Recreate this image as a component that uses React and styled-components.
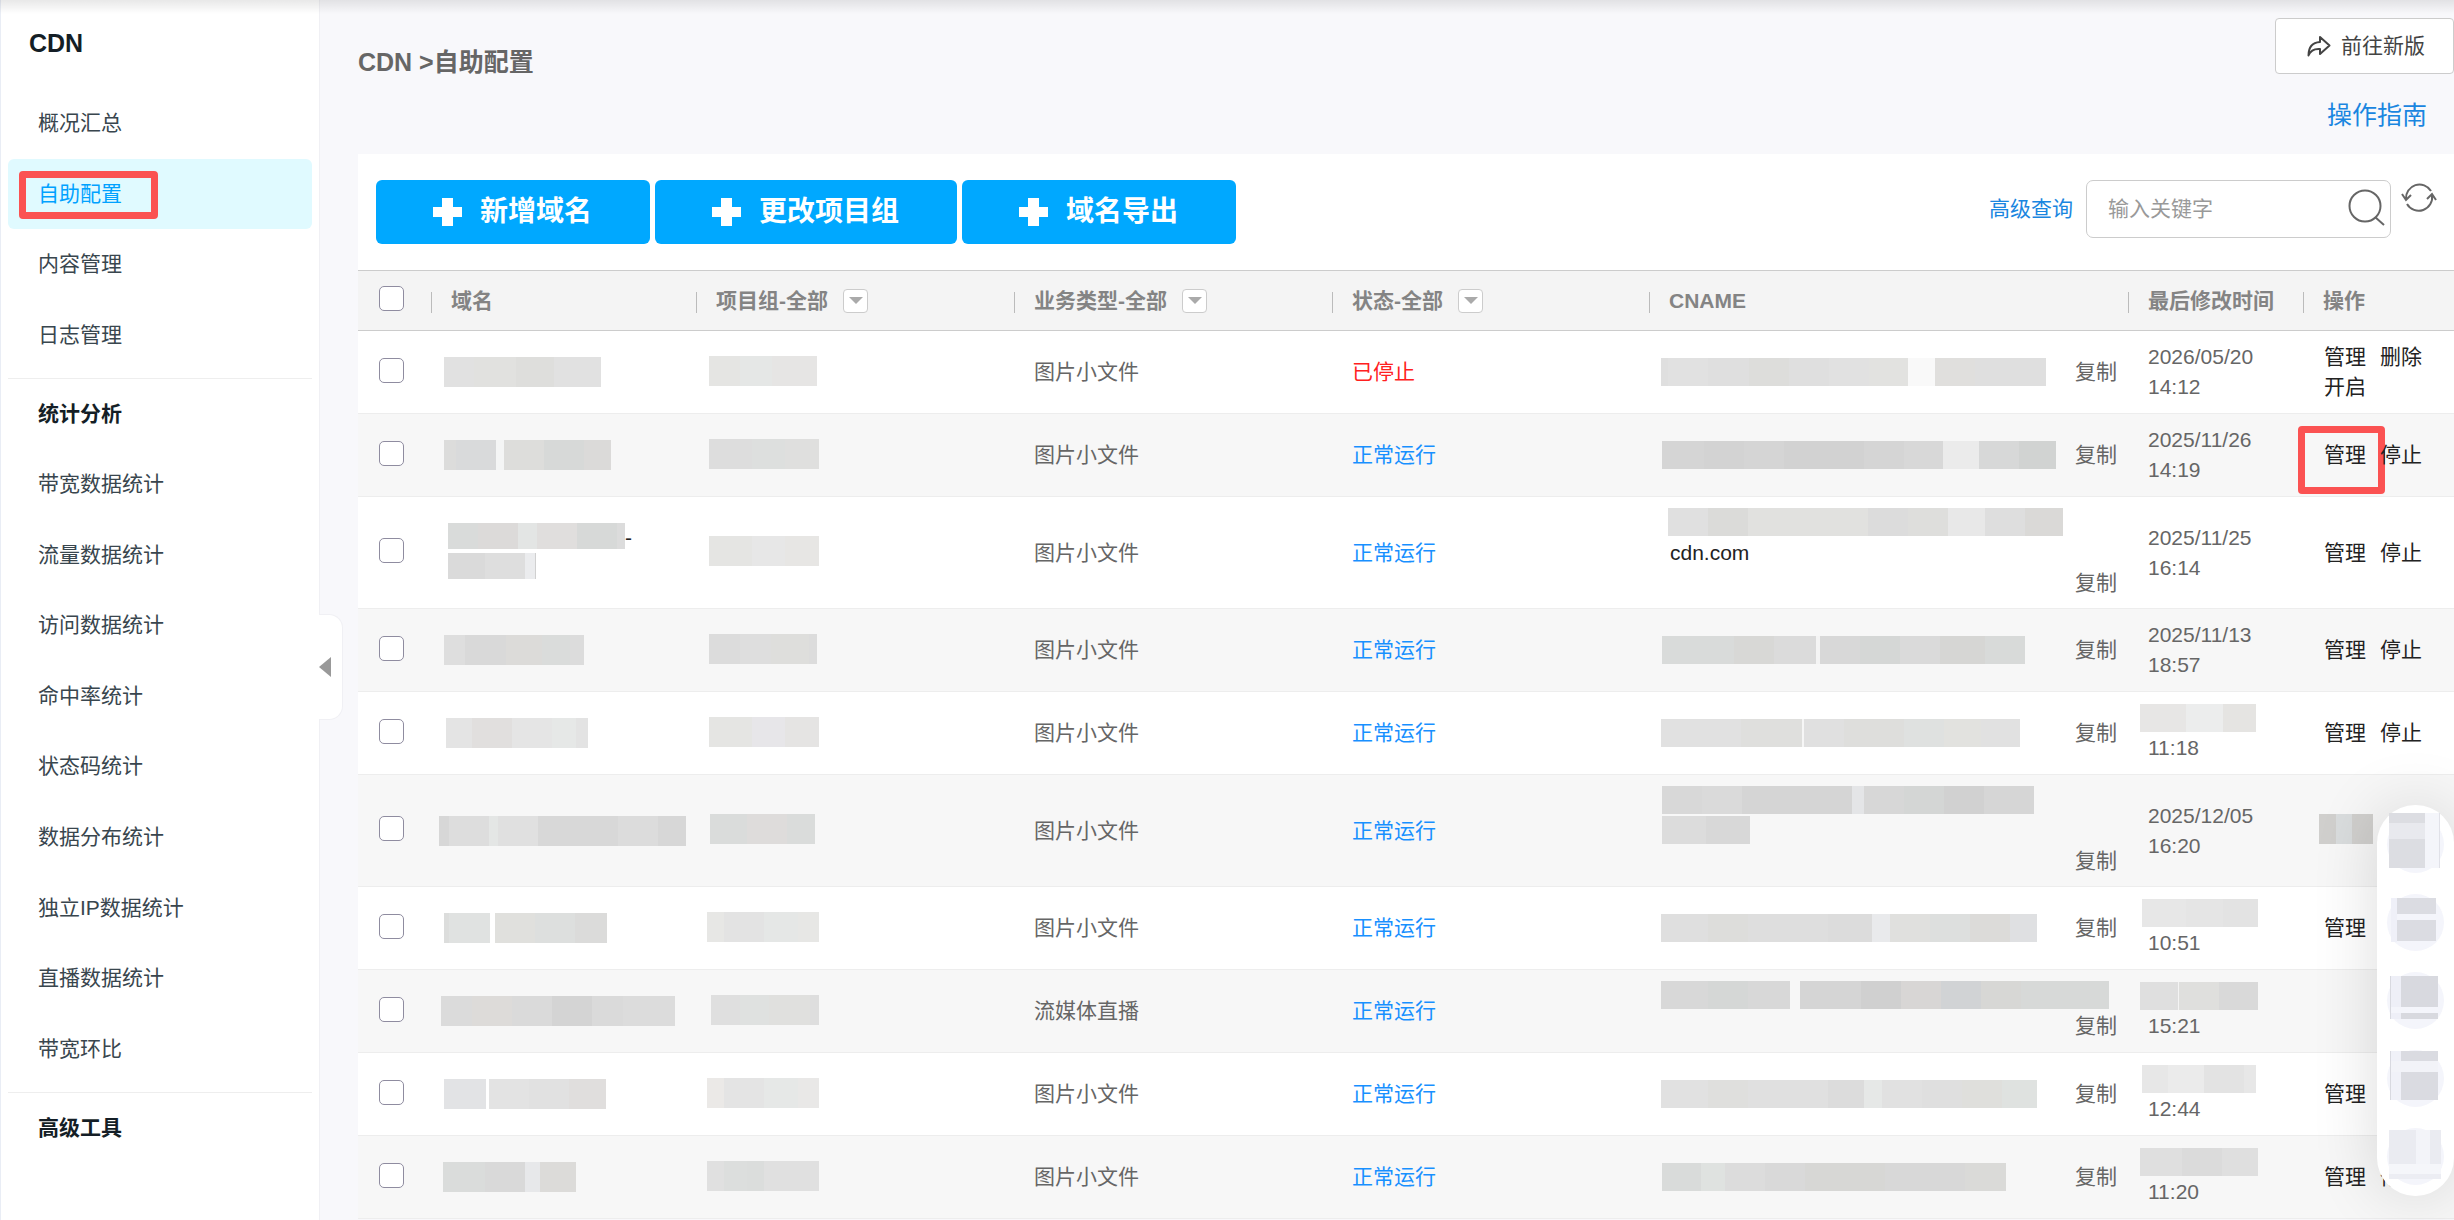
import React from "react";
import styled, { createGlobalStyle } from "styled-components";

const GlobalStyle = createGlobalStyle`
  * {
    box-sizing: border-box;
  }
  body {
    margin: 0;
    background: #f8f8fb;
    color: #666;
    font-family: "Liberation Sans", "Noto Sans CJK SC", sans-serif;
    font-size: 21px;
    line-height: 30px;
  }
  a {
    color: inherit;
    text-decoration: none;
  }
  button, input {
    font: inherit;
  }
`;

const Page = styled.div`
  display: flex;
  min-height: 100vh;
  position: relative;
  overflow: hidden;
`;

const TopShadow = styled.div`
  position: absolute;
  top: 0;
  left: 0;
  right: 0;
  height: 14px;
  pointer-events: none;
  background: linear-gradient(rgba(0, 0, 0, 0.09), rgba(0, 0, 0, 0));
`;

/* ---------- sidebar ---------- */

const Sidebar = styled.aside`
  position: relative;
  flex: none;
  width: 320px;
  padding: 28px 7px 0;
  background: #fff;
  border-left: 1px solid #e9edf5;
  border-right: 1px solid #f0f0f4;
`;

const SideTitle = styled.h1`
  margin: 0 0 30px;
  padding-left: 21px;
  font-size: 25px;
  line-height: 30px;
  color: #141e26;
`;

const Menu = styled.ul`
  display: grid;
  grid-auto-rows: 1fr;
  height: ${(p) => p.$height}px;
  margin: 0 0 8px;
  padding: 0;
  list-style: none;
`;

const MenuLink = styled.a`
  display: flex;
  align-items: center;
  height: 100%;
  padding-left: 30px;
  border-radius: 6px;
  color: ${(p) => (p.$active ? "#00a2ff" : "#39464e")};
  background: ${(p) => (p.$active ? "#e0faff" : "transparent")};
`;

const GroupTitle = styled.h2`
  margin: 0;
  padding-left: 30px;
  border-top: 1px solid #eee;
  font-size: 21px;
  line-height: 70px;
  color: #141e26;
`;

const Collapse = styled.button`
  position: absolute;
  left: 100%;
  top: calc(50% + 4px);
  width: 24px;
  height: 106px;
  padding: 0;
  border: 1px solid #f0f0f4;
  border-left: 0;
  border-radius: 0 14px 14px 0;
  background: #fff;
  svg {
    display: block;
  }
`;

const Marked = styled.span`
  position: relative;
`;

const RedMark = styled.i`
  position: absolute;
  inset: ${(p) => p.$inset};
  border: 7px solid #fb5252;
  border-radius: 4px;
  pointer-events: none;
`;

/* ---------- main ---------- */

const Main = styled.main`
  flex: 1;
  min-width: 0;
  padding-left: 38px;
`;

const Header = styled.header`
  display: flex;
  justify-content: space-between;
  align-items: flex-start;
  padding: 18px 0 24px;
`;

const Breadcrumb = styled.div`
  padding-top: 29px;
  font-size: 25px;
  font-weight: bold;
`;

const HeaderLinks = styled.div`
  display: flex;
  flex-direction: column;
  align-items: flex-end;
  gap: 26px;
`;

const NewVersion = styled.button`
  display: flex;
  align-items: center;
  gap: 10px;
  height: 56px;
  padding: 0 28px 0 31px;
  border: 1px solid #ccc;
  border-radius: 4px;
  background: #fff;
  color: #444;
`;

const GuideLink = styled.a`
  margin-right: 27px;
  font-size: 25px;
  color: #1a86e0;
`;

const Panel = styled.section`
  background: #fff;
`;

const Toolbar = styled.div`
  display: flex;
  justify-content: space-between;
  padding: 26px 17px 26px 18px;
`;

const ButtonGroup = styled.div`
  display: flex;
  gap: 5px;
`;

const AddButton = styled.button`
  display: flex;
  align-items: center;
  gap: 18px;
  height: 64px;
  padding: 0 58px 0 57px;
  border: 0;
  border-radius: 6px;
  background: #00a8ff;
  color: #fff;
  font-size: 28px;
  font-weight: bold;
`;

const SearchGroup = styled.div`
  display: flex;
  align-items: center;
  height: 58px;
`;

const AdvancedLink = styled.a`
  margin-right: 13px;
  color: #1a86e0;
`;

const SearchBox = styled.label`
  display: flex;
  align-items: center;
  width: 305px;
  height: 58px;
  padding: 0 4px 0 21px;
  border: 1px solid #ccc;
  border-radius: 7px;
  input {
    flex: 1;
    min-width: 0;
    padding: 0;
    border: 0;
    outline: 0;
    background: none;
  }
  input::placeholder {
    color: #999;
  }
`;

const IconButton = styled.button`
  display: flex;
  padding: 0;
  border: 0;
  background: none;
`;

const Refresh = styled(IconButton)`
  align-self: flex-start;
  margin-left: 10px;
`;

/* ---------- table ---------- */

const Table = styled.table`
  width: 100%;
  table-layout: fixed;
  border-collapse: separate;
  border-spacing: 0;
`;

const Col = styled.col`
  width: ${(p) => (p.$w ? p.$w + "px" : "auto")};
`;

const Th = styled.th`
  height: 61px;
  padding: 0;
  border-top: 1px solid #ccc;
  border-bottom: 1px solid #ccc;
  background: #f4f4f4;
  color: #848484;
  text-align: left;
`;

const ThInner = styled.div`
  display: flex;
  align-items: center;
  gap: 15px;
  &::before {
    content: "";
    width: 1px;
    height: 21px;
    margin: 3px 4px 0 0;
    background: #bbb;
  }
`;

const FilterButton = styled.button`
  display: flex;
  align-items: center;
  justify-content: center;
  width: 25px;
  height: 24px;
  padding: 0;
  border: 1px solid #ccc;
  border-radius: 4px;
  background: #fff;
`;

const Tr = styled.tr`
  height: ${(p) => (p.$tall ? 112 : 83)}px;
  background: ${(p) => (p.$grey ? "#f7f7f7" : "#fff")};
`;

const Td = styled.td`
  padding: 0 0 0 ${(p) => p.$pad}px;
  border-bottom: 1px solid #ededed;
  color: ${(p) => p.$color || "#666"};
`;

const Check = styled.input`
  appearance: none;
  display: block;
  width: 25px;
  height: 25px;
  margin: 0 0 4px 21px;
  border: 1px solid #8f8ca0;
  border-radius: 5px;
  background: #fff;
`;

const Line = styled.div`
  display: flex;
  align-items: ${(p) => (p.$top ? "flex-start" : "center")};
  height: 30px;
  color: #222;
`;

const MaskCell = styled.div`
  display: flex;
  padding-bottom: 3px;
`;

const Strip = styled.span`
  display: flex;
  flex: none;
  height: ${(p) => p.$h}px;
`;

const Block = styled.i`
  width: ${(p) => p.$w}px;
  background: ${(p) => p.$c};
`;

const Cname = styled.div`
  display: flex;
  flex-direction: ${(p) => (p.$stacked ? "column" : "row")};
  justify-content: space-between;
  padding-right: 11px;
`;

const CnameText = styled.span`
  padding-left: 9px;
`;

const Copy = styled.a`
  flex: none;
  align-self: flex-end;
  color: #666;
`;

const TimeLine = styled.div`
  padding-left: ${(p) => (p.$masked ? 0 : 8)}px;
  display: flex;
  align-items: center;
  height: 30px;
`;

const Actions = styled.div`
  display: flex;
  flex-wrap: wrap;
  column-gap: 14px;
  color: #222;
`;

/* ---------- floating bar ---------- */

const FloatBar = styled.div`
  position: absolute;
  right: 0;
  top: 805px;
  display: flex;
  flex-direction: column;
  align-items: center;
  gap: 21px;
  width: 77px;
  padding: 11px 0;
  border-radius: 38px;
  background: #fff;
  box-shadow: 0 0 66px rgba(0, 0, 0, 0.14);
`;

const FloatItem = styled.button`
  width: 57px;
  height: 57px;
  padding: 0;
  border: 0;
  border-radius: 50%;
  background: #f4f5fb;
  svg {
    display: block;
    overflow: visible;
  }
`;

const menuTop = ["概况汇总", "自助配置", "内容管理", "日志管理"];
const menuStats = [
  "带宽数据统计",
  "流量数据统计",
  "访问数据统计",
  "命中率统计",
  "状态码统计",
  "数据分布统计",
  "独立IP数据统计",
  "直播数据统计",
  "带宽环比",
];

const columns = [
  { w: 265, title: "域名" },
  { w: 318, title: "项目组-全部", filter: true },
  { w: 318, title: "业务类型-全部", filter: true },
  { w: 317, title: "状态-全部", filter: true },
  { title: "CNAME" },
  { w: 175, title: "最后修改时间" },
  { w: 151, title: "操作" },
];

const NONE = "transparent";

// every masked value is a list of [width, color]
const rows = [
  {
    domain: [[[5, NONE], [30, "#e1e1e1"], [42, "#e1e1df"], [38, "#dededc"], [47, "#e1e1e1"]]],
    project: [[2, NONE], [31, "#e5e5e3"], [32, "#e5e7e6"], [45, "#e6e5e4"]],
    status: "已停止",
    cname: [[[7, "#dfdfdf"], [40, "#e1e1e1"], [41, "#dfdfdf"], [40, "#dddddb"], [40, "#dfdfdf"], [40, "#e1e1e1"], [39, "#e2e2e0"], [27, "#f9f9f9"], [40, "#e0dfdd"], [71, "#dfdfdf"]]],
    time: ["2026/05/20", "14:12"],
    actions: ["管理", "删除", "开启"],
  },
  {
    domain: [[[5, NONE], [12, "#dcdcdb"], [40, "#d9dadb"], [8, "#f4f5f5"], [40, "#dddddb"], [40, "#d7d9d8"], [27, "#dbdad9"]]],
    project: [[2, NONE], [43, "#dddddd"], [33, "#dddfde"], [34, "#dfdfde"]],
    cname: [[[1, NONE], [42, "#d5d5d5"], [40, "#d3d3d3"], [40, "#d5d5d5"], [80, "#d2d2d2"], [40, "#d5d5d5"], [39, "#d8d8d8"], [36, "#ebebeb"], [40, "#d7d8d8"], [37, "#d1d3d2"]]],
    time: ["2025/11/26", "14:19"],
    actions: ["管理", "停止"],
    marked: true,
  },
  {
    tall: true,
    domain: [
      [[9, NONE], [30, "#d9dbda"], [40, "#dcdad9"], [19, "#e3e5e4"], [40, "#e0dedd"], [40, "#d7d9d8"], [8, "#dcdcdc"]],
      [[9, NONE], [37, "#dadada"], [40, "#dedede"], [10, "#ebecee"], [1, "#d0d0d0"]],
    ],
    domainTail: "-",
    project: [[2, NONE], [43, "#e5e5e3"], [33, "#e7e7e7"], [34, "#e7e6e4"]],
    cname: [[[7, NONE], [40, "#e0e0e0"], [40, "#dbdbd9"], [120, "#e1e1df"], [40, "#dcdcdc"], [40, "#dededc"], [37, "#e8e8e8"], [40, "#dedede"], [38, "#dad9d7"]]],
    cnameText: "cdn.com",
    stacked: true,
    time: ["2025/11/25", "16:14"],
    actions: ["管理", "停止"],
  },
  {
    domain: [[[5, NONE], [21, "#dedede"], [41, "#d9d9d9"], [36, "#dcdbd9"], [28, "#dadcdb"], [14, "#dcdcdc"]]],
    project: [[2, NONE], [31, "#dcdcdc"], [31, "#dedede"], [38, "#dededc"], [8, "#dcdcdc"]],
    cname: [[[1, NONE], [72, "#d9dbda"], [40, "#d8d8d6"], [42, "#dbdbdb"], [4, "#f4f4f4"], [40, "#d8d8d8"], [40, "#d5d7d6"], [40, "#dadada"], [45, "#d6d6d4"], [40, "#d8dad9"]]],
    time: ["2025/11/13", "18:57"],
    actions: ["管理", "停止"],
  },
  {
    domain: [[[7, NONE], [26, "#e4e4e4"], [40, "#e1dfde"], [40, "#e5e5e5"], [24, "#e6e8e7"], [12, "#e3e3e3"]]],
    project: [[2, NONE], [43, "#e5e5e3"], [33, "#e7e6e9"], [34, "#e5e4e3"]],
    cname: [[[80, "#e1e1e1"], [61, "#dfdfdd"], [2, "#f6f6f6"], [40, "#e0e0e0"], [60, "#dededc"], [40, "#dfe1e0"], [37, "#e2e2df"], [39, "#e1e1e1"]]],
    timeMask: [[46, "#e7e6e5"], [37, "#eceded"], [33, "#e5e4e2"]],
    time: [null, "11:18"],
    actions: ["管理", "停止"],
  },
  {
    tall: true,
    domain: [[[10, "#d7d7d7"], [40, "#dddddd"], [9, "#e4e6e5"], [40, "#e0e0e0"], [80, "#d8d8d8"], [40, "#dcdcdc"], [28, "#d7d7d7"]]],
    project: [[3, NONE], [37, "#dadcdb"], [40, "#dedcdb"], [28, "#dadcdb"]],
    cname: [
      [[1, NONE], [40, "#d8d8d8"], [40, "#dadada"], [110, "#d5d5d5"], [12, "#e4e5e7"], [40, "#d7d7d7"], [40, "#d4d6d5"], [40, "#d1d1d1"], [50, "#d6d6d6"]],
      [[1, NONE], [44, "#dcdcdc"], [44, "#d8d8d8"]],
    ],
    stacked: true,
    time: ["2025/12/05", "16:20"],
    actionMask: [[17, "#d0cfcd"], [16, "#d9dcdd"], [21, "#d0cfcd"]],
  },
  {
    domain: [[[5, NONE], [5, "#dcdddc"], [41, "#e0e2e1"], [5, NONE], [40, "#e0e0dd"], [40, "#dddfde"], [32, "#dbdbda"]]],
    project: [[17, "#e7e7e5"], [40, "#e3e3e3"], [34, "#e5e7e6"], [21, "#e7e7e5"]],
    cname: [[[47, "#dfdfdf"], [40, "#dddddb"], [80, "#dedede"], [44, "#dcdcdc"], [18, "#e9eaec"], [40, "#e0e0de"], [40, "#dddfde"], [40, "#dcdbd9"], [27, "#dfe0e2"]]],
    timeMask: [[2, NONE], [44, "#e7e7e7"], [37, "#e5e5e5"], [35, "#e3e3e3"]],
    time: [null, "10:51"],
    actions: ["管理"],
  },
  {
    domain: [[[2, NONE], [31, "#dbdbdb"], [40, "#dddbd9"], [40, "#dadada"], [40, "#d4d4d4"], [31, "#dadada"], [52, "#dcdcdc"]]],
    type: "流媒体直播",
    project: [[4, NONE], [29, "#dfdfdf"], [29, "#dfe1e0"], [41, "#e0e0de"], [9, "#dedede"]],
    cname: [[[47, "#d8d8d8"], [40, "#d5d7d6"], [42, "#d8d8d8"], [10, NONE], [61, "#d5d5d5"], [40, "#d0d0d0"], [40, "#d8d6d5"], [40, "#d1d3d5"], [40, "#d7d7d5"], [88, "#d7d9d8"]]],
    stacked: true,
    timeMask: [[38, "#dfdfdf"], [1, "#f4f4f4"], [40, "#dfdfdd"], [39, "#d9d9d9"]],
    time: [null, "15:21"],
  },
  {
    domain: [[[5, NONE], [42, "#e2e3e5"], [3, NONE], [40, "#e3e3e3"], [40, "#e1e1e1"], [37, "#e0dedd"]]],
    project: [[17, "#ebe9e7"], [40, "#e4e4e4"], [34, "#e6e8e7"], [21, "#e9e8e7"]],
    cname: [[[47, "#e1e1e1"], [40, "#dfdfdd"], [80, "#e0e0e0"], [36, "#dcdcdc"], [18, "#e6e8e7"], [40, "#e1e1e1"], [40, "#dfdfdf"], [40, "#dfdfdc"], [35, "#dfe2e0"]]],
    timeMask: [[2, NONE], [26, "#e7e7e7"], [36, "#ebebeb"], [40, "#e3e3e3"], [12, "#e7e7e7"]],
    time: [null, "12:44"],
    actions: ["管理"],
  },
  {
    domain: [[[4, NONE], [42, "#dadcdb"], [40, "#d9d9d9"], [15, "#e7e8ea"], [36, "#dcdbd9"]]],
    project: [[17, "#e0e0e0"], [23, "#dcdedd"], [17, "#dbdddc"], [55, "#e0e0e0"]],
    cname: [[[1, NONE], [39, "#d9dbda"], [24, "#dfe2e0"], [40, "#dcdcdc"], [40, "#d9d9d9"], [80, "#d7d7d5"], [80, "#d8d8d8"], [41, "#dadad8"]]],
    timeMask: [[42, "#dfdfdf"], [40, "#dbdbdb"], [36, "#dfdfdf"]],
    time: [null, "11:20"],
    actions: ["管理", "停止"],
  },
];

// blocks inside each floating button: [x, y, width, height, color]
const floatItems = [
  [[2, -3, 36, 10, "#dcdde2"], [2, 7, 36, 16, "#e8e9ee"], [2, 23, 36, 29, "#dcdde2"], [38, -3, 15, 55, "#f4f5fa"], [52, -3, 1, 55, "#e0e1e8"]],
  [[4, 4, 6, 44, "#eff0f8"], [10, 4, 39, 16, "#dbdce2"], [10, 20, 39, 6, "#f4f5fb"], [10, 26, 39, 21, "#dbdce2"]],
  [[3, 4, 1, 43, "#d8d9e0"], [4, 4, 10, 43, "#eeeff7"], [14, 4, 37, 31, "#d8d9df"], [4, 35, 47, 6, "#f4f5fb"], [14, 41, 37, 6, "#d8d9df"]],
  [[3, 1, 1, 49, "#d8d9e0"], [4, 1, 10, 49, "#f0f1f8"], [14, 1, 37, 10, "#dadbe1"], [4, 11, 47, 11, "#f2f3f8"], [14, 22, 37, 28, "#dadbe1"]],
  [[2, 2, 27, 34, "#eaebf1"], [29, 2, 14, 34, "#f3f4f9"], [43, 2, 11, 34, "#eaebf1"], [2, 36, 52, 10, "#f5f6fa"], [2, 46, 52, 5, "#ecedf3"]],
];

function Mask({ parts, h = 30 }) {
  return (
    <Strip $h={h}>
      {parts.map(([w, c], i) => (
        <Block key={i} $w={w} $c={c} />
      ))}
    </Strip>
  );
}

function Plus() {
  return (
    <svg width="29" height="28" viewBox="0 0 29 28" fill="#fff">
      <path d="M9 0h11v9h9v10h-9v9H9v-9H0V9h9z" />
    </svg>
  );
}

function Triangle() {
  return (
    <svg width="14" height="7" viewBox="0 0 14 7" fill="#aaa">
      <path d="M0 0h14L7 7z" />
    </svg>
  );
}

function ShareIcon() {
  return (
    <svg width="24" height="22" viewBox="0 0 24 22" fill="none" stroke="#444" strokeWidth="2" strokeLinejoin="round">
      <path d="M13 2l9.500 8.500L13 19v-5C7 13.500 3.500 15.500 1.500 20.500 1.500 12.500 5.500 7.500 13 7z" />
    </svg>
  );
}

function SearchIcon() {
  return (
    <svg width="38" height="42" viewBox="0 0 38 42" fill="none" stroke="#666" strokeWidth="2">
      <circle cx="17" cy="18" r="15.500" />
      <path d="M27 29l9 8" />
    </svg>
  );
}

function RefreshIcon() {
  return (
    <svg width="36" height="34" viewBox="0 0 36 34" fill="none" stroke="#666" strokeWidth="2">
      <path d="M30 11A13.500 13.500 0 0 0 5 19M1 14l4 6 5-5" />
      <path d="M6 24A13.500 13.500 0 0 0 31 15M26 19l5-5 4 6" />
    </svg>
  );
}

function MenuList({ items, active, height }) {
  return (
    <Menu $height={height}>
      {items.map((name) => (
        <li key={name}>
          <MenuLink href="#" $active={name === active}>
            {name === active ? (
              <Marked>
                {name}
                <RedMark $inset="-8px -36px -10px -19px" />
              </Marked>
            ) : (
              name
            )}
          </MenuLink>
        </li>
      ))}
    </Menu>
  );
}

function Row({ row, grey }) {
  const twoLines = row.domain.length > 1;
  return (
    <Tr $tall={row.tall} $grey={grey}>
      <Td $pad={0}>
        <Check type="checkbox" aria-label="选择域名" />
      </Td>
      <Td $pad={8}>
        {row.domain.map((parts, i) => (
          <Line key={i} $top={twoLines}>
            <Mask parts={parts} h={twoLines ? 26 : 30} />
            {i === 0 && row.domainTail}
          </Line>
        ))}
      </Td>
      <Td $pad={11}>
        <MaskCell>
          <Mask parts={row.project} />
        </MaskCell>
      </Td>
      <Td $pad={20}>{row.type || "图片小文件"}</Td>
      <Td $pad={20} $color={row.status ? "#ff2020" : "#1890ff"}>
        {row.status || "正常运行"}
      </Td>
      <Td $pad={12}>
        <Cname $stacked={row.stacked}>
          <div>
            {row.cname.map((parts, i) => (
              <Line key={i} $top={row.stacked}>
                <Mask parts={parts} h={28} />
              </Line>
            ))}
            {row.cnameText && (
              <Line>
                <CnameText>{row.cnameText}</CnameText>
              </Line>
            )}
          </div>
          <Copy href="#">复制</Copy>
        </Cname>
      </Td>
      <Td $pad={12}>
        {row.timeMask ? (
          <TimeLine $masked>
            <Mask parts={row.timeMask} h={28} />
          </TimeLine>
        ) : (
          <TimeLine>{row.time[0]}</TimeLine>
        )}
        <TimeLine>{row.time[1]}</TimeLine>
      </Td>
      <Td $pad={row.actionMask ? 16 : 21}>
        {row.actionMask && (
          <MaskCell>
            <Mask parts={row.actionMask} />
          </MaskCell>
        )}
        <Actions>
          {(row.actions || []).map((name, i) => (
            <Marked key={name}>
              <a href="#">{name}</a>
              {row.marked && i === 0 && <RedMark $inset="-14px -19px -24px -26px" />}
            </Marked>
          ))}
        </Actions>
      </Td>
    </Tr>
  );
}

export default function App() {
  return (
    <>
      <GlobalStyle />
      <Page>
        <Sidebar>
          <SideTitle>CDN</SideTitle>
          <MenuList items={menuTop} active="自助配置" height={282} />
          <GroupTitle>统计分析</GroupTitle>
          <MenuList items={menuStats} height={635} />
          <GroupTitle>高级工具</GroupTitle>
          <Collapse aria-label="收起菜单">
            <svg width="12" height="20" viewBox="0 0 12 20" fill="#999">
              <path d="M12 0v20L0 10z" />
            </svg>
          </Collapse>
        </Sidebar>
        <Main>
          <Header>
            <Breadcrumb>CDN &gt;自助配置</Breadcrumb>
            <HeaderLinks>
              <NewVersion>
                <ShareIcon />
                前往新版
              </NewVersion>
              <GuideLink href="#">操作指南</GuideLink>
            </HeaderLinks>
          </Header>
          <Panel>
            <Toolbar>
              <ButtonGroup>
                {["新增域名", "更改项目组", "域名导出"].map((name) => (
                  <AddButton key={name}>
                    <Plus />
                    {name}
                  </AddButton>
                ))}
              </ButtonGroup>
              <SearchGroup>
                <AdvancedLink href="#">高级查询</AdvancedLink>
                <SearchBox>
                  <input type="text" placeholder="输入关键字" aria-label="输入关键字" />
                  <IconButton aria-label="搜索">
                    <SearchIcon />
                  </IconButton>
                </SearchBox>
                <Refresh aria-label="刷新">
                  <RefreshIcon />
                </Refresh>
              </SearchGroup>
            </Toolbar>
            <Table>
              <colgroup>
                <Col $w={73} />
                {columns.map((c) => (
                  <Col key={c.title} $w={c.w} />
                ))}
              </colgroup>
              <thead>
                <tr>
                  <Th>
                    <Check type="checkbox" aria-label="全选" />
                  </Th>
                  {columns.map((c) => (
                    <Th key={c.title}>
                      <ThInner>
                        {c.title}
                        {c.filter && (
                          <FilterButton aria-label={c.title}>
                            <Triangle />
                          </FilterButton>
                        )}
                      </ThInner>
                    </Th>
                  ))}
                </tr>
              </thead>
              <tbody>
                {rows.map((row, i) => (
                  <Row key={i} row={row} grey={i % 2 === 1} />
                ))}
              </tbody>
            </Table>
          </Panel>
        </Main>
        <TopShadow />
        <FloatBar>
          {floatItems.map((blocks, i) => (
            <FloatItem key={i} aria-label="快捷入口">
              <svg width="57" height="57" viewBox="0 0 57 57">
                {blocks.map(([x, y, w, h, c], j) => (
                  <rect key={j} x={x} y={y} width={w} height={h} fill={c} />
                ))}
              </svg>
            </FloatItem>
          ))}
        </FloatBar>
      </Page>
    </>
  );
}
